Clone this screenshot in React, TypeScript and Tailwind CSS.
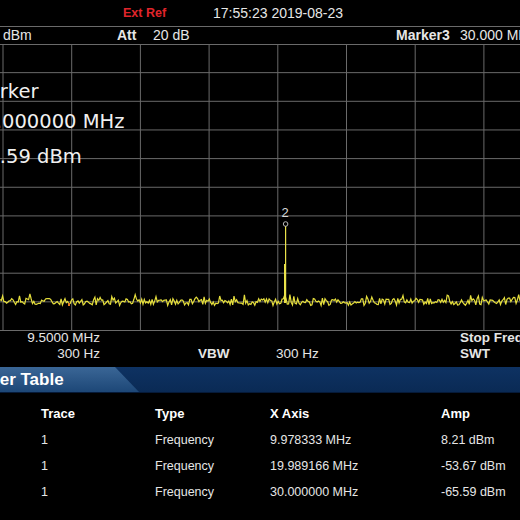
import React from "react";

const VX = [3, 71.7, 140.4, 209.1, 277.8, 346.5, 415.2, 483.9];
const HY = [1, 2, 3, 4, 5, 6, 7, 8, 9, 10].map((k) => 28.65 * k - 1);

function noisePoints() {
  let s = 987654;
  const rnd = () => {
    s = (s * 1103515245 + 12345) % 2147483648;
    return s / 2147483648;
  };
  const pts: string[] = [];
  for (let x = 0; x <= 521; x += 1.3) {
    let y = 257 + (rnd() - 0.5) * 7;
    if (rnd() > 0.85) y -= 2 + rnd() * 3.5;
    if (x > 498) y -= (x - 498) * 0.12;
    pts.push(`${x.toFixed(1)},${y.toFixed(1)}`);
  }
  return pts.join(" ");
}

const NOISE = noisePoints();

function Chart() {
  return (
    <svg className="absolute inset-0" width="520" height="286" viewBox="0 0 520 286">
      {VX.map((x) => (
        <line key={"v" + x} x1={x} y1={0} x2={x} y2={286} stroke="#6a6a6a" strokeWidth="1" />
      ))}
      {HY.map((y) => (
        <line key={"h" + y} x1={0} y1={y} x2={520} y2={y} stroke="#6a6a6a" strokeWidth="1" />
      ))}
      <polyline points={NOISE} fill="none" stroke="#e6df3c" strokeWidth="1.2" />
      <line x1={285.6} y1={181} x2={285.6} y2={258} stroke="#eae24a" strokeWidth="1.2" />
      <line x1={284.6} y1={219} x2={284.6} y2={258} stroke="#eae24a" strokeWidth="1.2" />
      <circle cx={285.6} cy={179} r={2.3} fill="none" stroke="#b8b8b8" strokeWidth="1" />
      <text x={285} y={172} textAnchor="middle" fontSize="13" fill="#d8d8d8" fontFamily="'Liberation Sans', Arial, sans-serif">
        2
      </text>
      <rect x={68} y={258} width={2} height={3} fill="#e07a20" />
    </svg>
  );
}

export default function App() {
  return (
    <div className="w-[520px] h-[520px] overflow-hidden bg-black text-[#e6e6e6] font-['Liberation_Sans',Arial,sans-serif]">
      {/* top status bar */}
      <div className="h-[27px] border-b border-[#6a6a6a] flex items-center pl-[123px] whitespace-nowrap">
        <span className="w-[90px] text-[12.5px] font-bold text-[#e0252b]">Ext Ref</span>
        <span className="text-[14px]">17:55:23 2019-08-23</span>
      </div>
      {/* second row */}
      <div className="h-[18px] border-b border-[#6a6a6a] flex items-center text-[14px] whitespace-nowrap overflow-hidden">
        <span className="w-[117px] pl-[3px] shrink-0">dBm</span>
        <span className="w-[36px] shrink-0 font-bold">Att</span>
        <span className="w-[243px] shrink-0">20 dB</span>
        <span className="w-[64px] shrink-0 font-bold">Marker3</span>
        <span className="shrink-0">30.000 MHz</span>
      </div>
      {/* chart */}
      <div className="relative h-[286px] overflow-hidden">
        <Chart />
        <div className="relative pt-[32px] ml-[-29px] text-[19.5px] leading-[30px] text-[#f0f0f0] font-['DejaVu_Sans',Verdana,sans-serif] whitespace-nowrap">
          <div>Marker</div>
          <div>30.000000 MHz</div>
          <div className="mt-[5px] ml-[-3px]">-65.59 dBm</div>
        </div>
      </div>
      {/* bottom labels */}
      <div className="h-[36px] text-[13.5px] whitespace-nowrap overflow-hidden">
        <div className="h-[14px] flex items-center">
          <span className="w-[100px] shrink-0 text-right">9.5000 MHz</span>
          <span className="w-[360px] shrink-0"></span>
          <span className="font-bold">Stop Freq</span>
        </div>
        <div className="h-[18px] flex items-center">
          <span className="w-[100px] shrink-0 text-right">300 Hz</span>
          <span className="w-[98px] shrink-0"></span>
          <span className="w-[78px] shrink-0 font-bold">VBW</span>
          <span className="w-[184px] shrink-0">300 Hz</span>
          <span className="font-bold">SWT</span>
        </div>
      </div>
      {/* tab bar */}
      <div className="h-[26px] bg-[linear-gradient(#0e3262,#0a2a55)] border-b border-[#061a38] flex">
        <div className="w-[140px] h-full bg-[linear-gradient(#3a6696,#1d4777)] [clip-path:polygon(0_0,115px_0,139px_100%,0_100%)] flex items-center overflow-hidden">
          <span className="ml-[-40px] text-[17px] font-bold text-white whitespace-nowrap">Marker Table</span>
        </div>
      </div>
      {/* table */}
      <div className="pt-[8px] pl-[41px] text-[12.5px]">
        <div className="h-[26px] grid grid-cols-[114px_115px_171px_1fr] items-center font-bold text-white text-[13px]">
          <span>Trace</span>
          <span>Type</span>
          <span>X Axis</span>
          <span>Amp</span>
        </div>
        {[
          ["1", "Frequency", "9.978333 MHz", "8.21 dBm"],
          ["1", "Frequency", "19.989166 MHz", "-53.67 dBm"],
          ["1", "Frequency", "30.000000 MHz", "-65.59 dBm"],
        ].map((r, i) => (
          <div key={i} className="h-[26px] grid grid-cols-[114px_115px_171px_1fr] items-center">
            {r.map((c, j) => (
              <span key={j}>{c}</span>
            ))}
          </div>
        ))}
      </div>
    </div>
  );
}
